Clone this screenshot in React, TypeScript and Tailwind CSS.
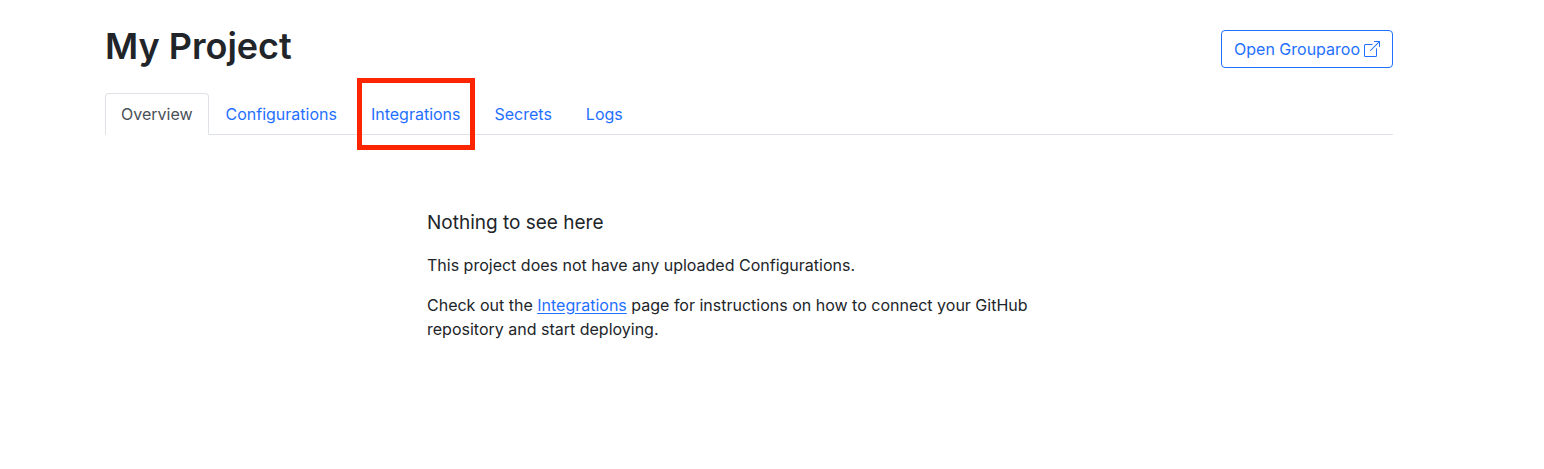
import React from 'react';
import { clsx } from 'clsx';
import { BsBoxArrowUpRight } from 'react-icons/bs';

const tabs = [
  { name: 'Overview', active: true },
  { name: 'Configurations' },
  { name: 'Integrations', highlighted: true },
  { name: 'Secrets' },
  { name: 'Logs' },
];

export default function App() {
  return (
    <div className="min-h-screen bg-white pr-[46px] font-['Inter',sans-serif] text-base text-[#212529]">
      <div className="mx-auto max-w-[1288px] pt-6">
        {/* Header */}
        <header className="flex items-end justify-between">
          <h1 className="text-4xl leading-11 font-semibold">My Project</h1>
          <a
            href="#open"
            className="flex h-[38px] items-center gap-1 rounded border border-[#1f70ff] px-3 text-[#1f70ff]"
          >
            Open Grouparoo
            <BsBoxArrowUpRight className="size-4" />
          </a>
        </header>

        {/* Tabs */}
        <nav className="mt-[25px] flex border-b border-[#dee2e6]">
          {tabs.map(tab => (
            <a
              key={tab.name}
              href={`#${tab.name.toLowerCase()}`}
              className={clsx(
                'relative -mb-px rounded-t border py-2',
                tab.active
                  ? 'border-[#dee2e6] border-b-white px-[15px] text-[#495057]'
                  : 'border-transparent px-4 text-[#1f70ff]'
              )}
            >
              {tab.name}
              {tab.highlighted && (
                <span className="absolute inset-x-0.5 -top-4 -bottom-4 border-5 border-[#fb2600]" />
              )}
            </a>
          ))}
        </nav>

        {/* Empty state */}
        <main className="mx-auto mt-18 w-1/2">
          <h2 className="text-[19px] leading-8">Nothing to see here</h2>
          <p className="mt-[14px]">This project does not have any uploaded Configurations.</p>
          <p className="mt-4">
            Check out the{' '}
            <a href="#integrations" className="text-[#1f70ff] underline underline-offset-2">Integrations</a>{' '}
            page for instructions on how to connect your GitHub repository and start deploying.
          </p>
        </main>
      </div>
    </div>
  );
}
